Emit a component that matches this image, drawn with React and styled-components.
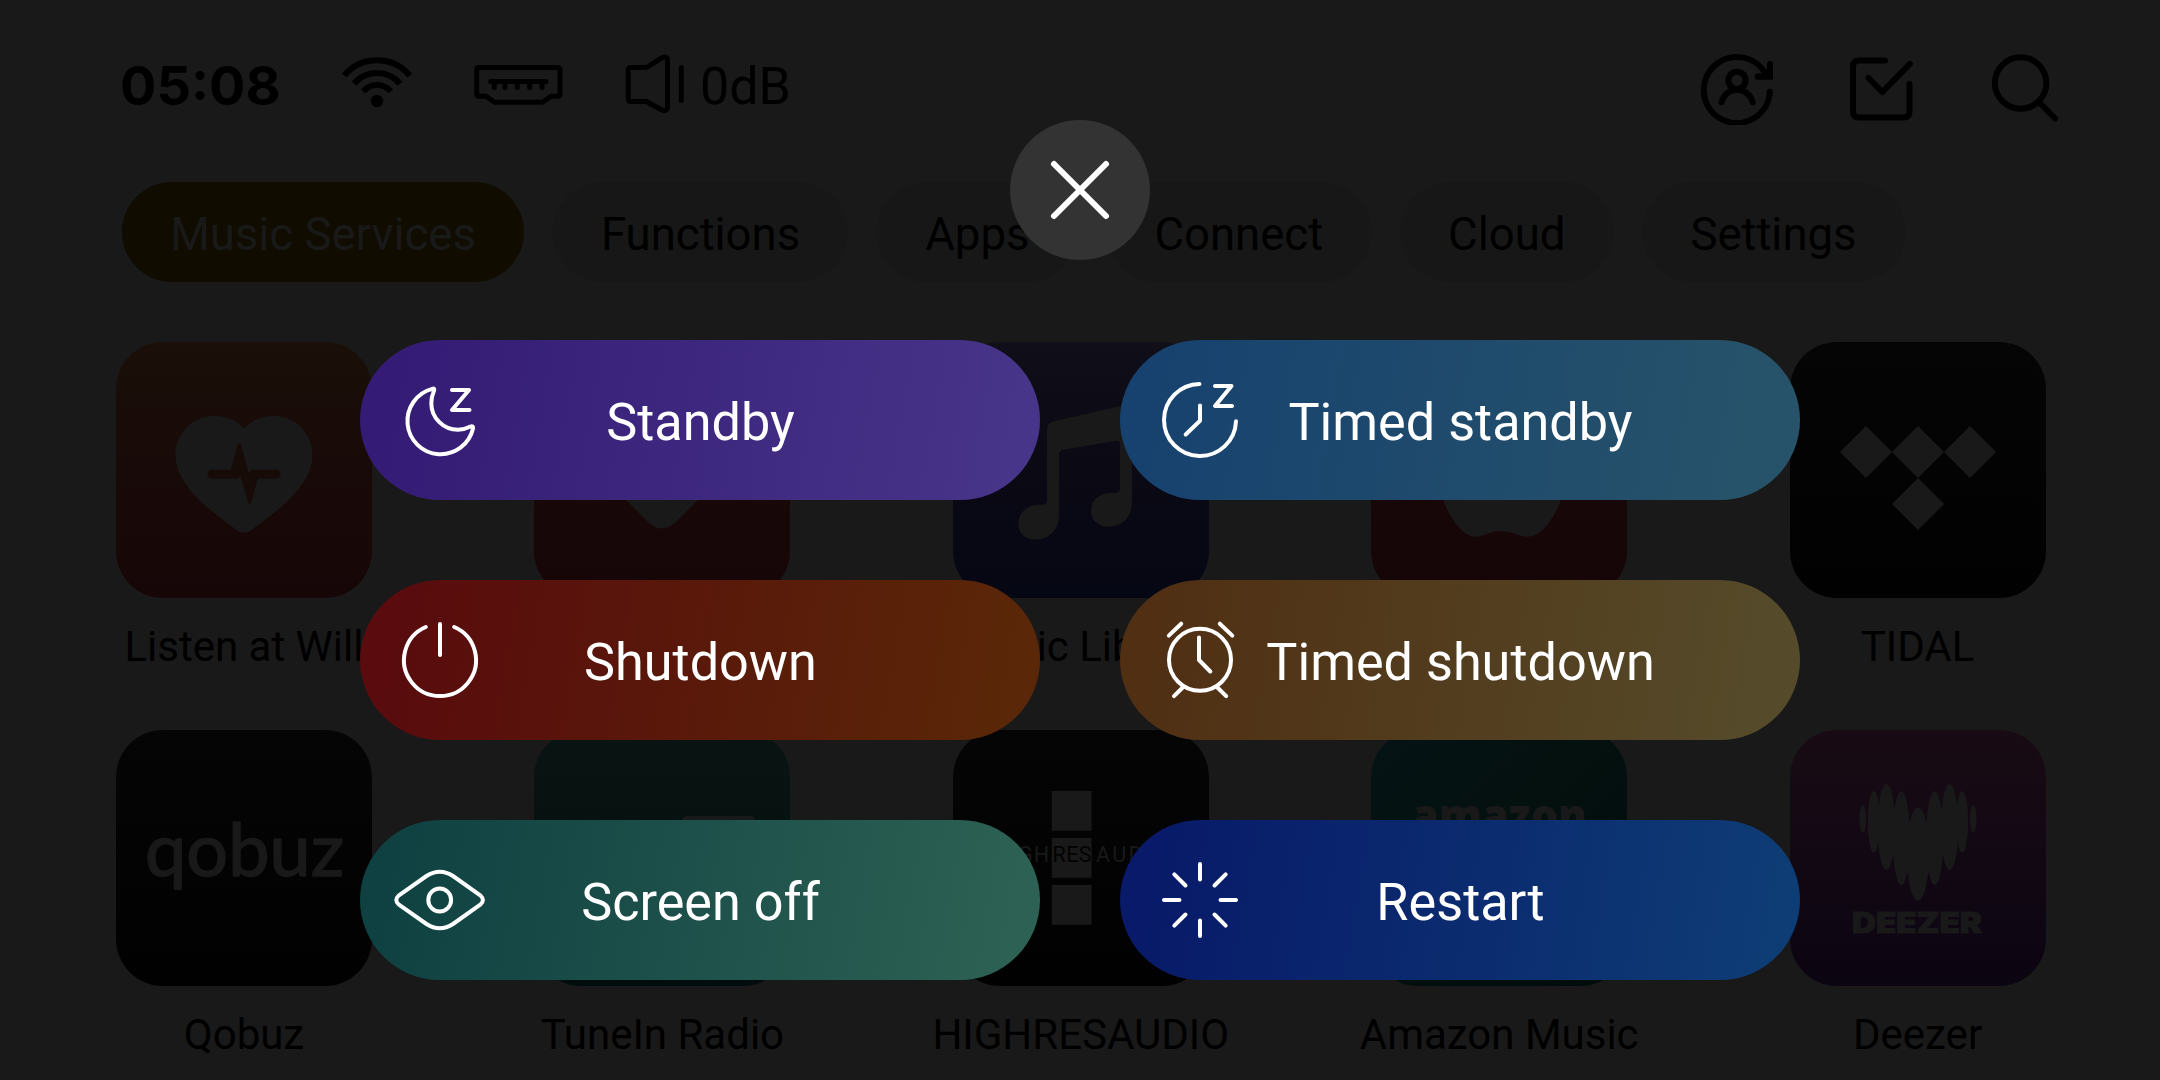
import React from 'react';
import styled, { createGlobalStyle } from 'styled-components';

const GlobalStyle = createGlobalStyle`
  * { box-sizing: border-box; }
  html, body { margin: 0; padding: 0; background: #191919; overflow: hidden; }
  svg { display: block; flex: none; }
`;

const Screen = styled.div`
  position: relative;
  width: 2160px;
  height: 1080px;
  overflow: hidden;
  background: #191919;
  color: #000;
  font-family: Roboto, 'Liberation Sans', sans-serif;
`;

const StatusBar = styled.header`
  display: flex;
  align-items: center;
  height: 182px;
  padding: 0 101px 12px 120px;
`;

const Clock = styled.div`
  width: 221px;
  font: 700 54px/80px Inter, sans-serif;
  padding-top: 1px;
`;

const Line = styled.svg`
  fill: none;
  stroke: ${(p) => p.$color || '#000'};
  stroke-width: ${(p) => p.$weight || 6};
  stroke-linecap: ${(p) => p.$cap || 'round'};
  stroke-linejoin: round;
  margin-right: ${(p) => p.$after || 0}px;
`;

const Volume = styled.div`
  font-size: 52px;
  line-height: 80px;
  padding-top: 4px;
  margin-right: auto;
`;

const Tabs = styled.nav`
  display: flex;
  gap: 29px;
  height: 100px;
  padding-left: 122px;
`;

const Tab = styled.div`
  display: flex;
  align-items: center;
  padding: 4px 48px 0;
  border-radius: 50px;
  font-size: 45.5px;
  white-space: nowrap;
  background: ${(p) => (p.$active ? '#100c00' : '#171717')};
  color: ${(p) => (p.$active ? '#191919' : '#000')};
`;

const AppGrid = styled.main`
  display: grid;
  grid-template-columns: repeat(5, 256px);
  grid-auto-rows: 388px;
  column-gap: 162.4px;
  padding: 60px 0 0 116px;
`;

const AppCell = styled.div`
  display: flex;
  flex-direction: column;
  align-items: center;
`;

const Tile = styled.div`
  width: 256px;
  height: 256px;
  border-radius: 47px;
  overflow: hidden;
  background: ${(p) => p.$bg};
`;

const AppName = styled.div`
  margin-top: 23px;
  font-size: 42px;
  line-height: 52px;
  white-space: nowrap;
`;

const Overlay = styled.div`
  position: absolute;
  inset: 0;
  display: flex;
  flex-direction: column;
  align-items: center;
  gap: 80px;
  padding-top: 120px;
`;

const CloseButton = styled.div`
  display: flex;
  align-items: center;
  justify-content: center;
  width: 140px;
  height: 140px;
  border-radius: 50%;
  background: #333;
`;

const PowerGrid = styled.div`
  display: grid;
  grid-template-columns: repeat(2, 680px);
  grid-auto-rows: 160px;
  gap: 80px;
`;

const PowerButton = styled.div`
  display: grid;
  grid-template-columns: 130px 1fr 130px;
  align-items: center;
  justify-items: end;
  border-radius: 80px;
  background: linear-gradient(100deg, ${(p) => p.$from} 5%, ${(p) => p.$to} 95%);
`;

const PowerLabel = styled.div`
  justify-self: center;
  padding: 5px 0 0 1px;
  font-size: 52.2px;
  color: #fff;
  white-space: nowrap;
`;

const INK = '#191919';

const Logo = ({ children }) => (
  <svg width="256" height="256" viewBox="0 0 256 256" fill={INK}>{children}</svg>
);

const heart =
  'M128 86.5 C119 77 108 73.5 97 74 C75 75 59.5 92 59.5 113 C59.5 143 92 167 121 188.5 Q128 193 135 188.5 C164 167 196.5 143 196.5 113 C196.5 92 181 75 159 74 C148 73.5 137 77 128 86.5Z';

const deezerBars = [
  [72.7, 3.3, 75.3, 102.7], [83.8, 6, 61, 122.7], [96.4, 8.8, 53.7, 140.3],
  [111.3, 8.6, 61, 155.3], [128, 11.2, 77.3, 170.7], [144.7, 8.6, 61, 155.3],
  [159.6, 8.8, 53.7, 140.3], [172.2, 6, 61, 122.7], [183.3, 3.3, 75.3, 102.7],
];

const apps = [
  {
    name: 'Listen at Will',
    bg: 'linear-gradient(#1a0f09, #180a08 50%, #170607)',
    logo: (
      <>
        <path d={heart} />
        <path fill="#170b08" d="M96 127.7H114.8L121.5 102.5Q123.3 100 125 102.5L132.7 132L134.5 127.7H160A4.5 4.5 0 0 1 160 136.7H141.6L135.2 160.5Q133.7 163.5 132.2 160.5L124.3 133.5L122 136.7H96A4.5 4.5 0 0 1 96 127.7Z" />
      </>
    ),
  },
  {
    name: '',
    bg: 'linear-gradient(#190a0a, #170607)',
    logo: <path d="M128 80C100 48 54 76 62 116C66 134 80 146 92 158L115 181Q128 192 141 181L164 158C176 146 190 134 194 116C202 76 156 48 128 80Z" />,
  },
  {
    name: 'Music Library',
    bg: 'linear-gradient(#100e18, #0a0914 50%, #060714)',
    logo: (
      <path d="M94 88Q94 81 100 79.5L172 63Q179 61.5 179 69V160C179 174 170 184.7 156 184.7C145 184.7 138 178 138 169C138 158 147 151 158 150.7H163Q167 150.7 167 146V102Q167 98 163 98.8L110 107.8Q106 109 106 113V173C106 187 97 197.5 82 197.5C72 197.5 65.3 191 65.3 182C65.3 171 74 163 85 162.7H90Q94 162.7 94 158Z" />
    ),
  },
  {
    name: '',
    bg: 'linear-gradient(#190a0b, #160506)',
    logo: <path d="M128 72C112 64 96 61 82 70C54 88 60 130 72 158C80 178 92 194.7 105 194.7C113 194.7 119 189 129 189C141 189 147 194.7 157 194.7C171 194.7 183 176 190 158C174 150 166 134 168 116C170 100 180 91 188 85C170 60 148 64 128 72Z" />,
  },
  {
    name: 'TIDAL',
    bg: 'linear-gradient(#050505, #030303 50%, #010101)',
    logo: <path d="M76 84l26 26-26 26-26-26zM128 84l26 26-26 26-26-26zM180 84l26 26-26 26-26-26zM128 136l26 26-26 26-26-26z" />,
  },
  {
    name: 'Qobuz',
    bg: 'linear-gradient(#050505, #030303 50%, #010101)',
    logo: (
      <text x="29" y="146" fontFamily="Lato, sans-serif" fontSize="74" textLength="199" lengthAdjust="spacingAndGlyphs" stroke={INK} strokeWidth="1.6" strokeLinejoin="round">qobuz</text>
    ),
  },
  {
    name: 'TuneIn Radio',
    bg: 'linear-gradient(#0a1413, #05110f 50%, #010d0d)',
    logo: <rect x="148.6" y="86" width="72" height="72" rx="4" />,
  },
  {
    name: 'HIGHRESAUDIO',
    bg: 'linear-gradient(#050505, #030303 50%, #010101)',
    logo: (
      <g fontFamily="Roboto, sans-serif" fontSize="21.5">
        <path d="M98.8 61h39.8v39.8h-39.8zM98.8 108h39.8v39.8h-39.8zM98.8 155h39.8v39.8h-39.8z" />
        <text x="42" y="132" textLength="54">HIGH</text>
        <text x="99.5" y="132" textLength="39" fill="#030303">RES</text>
        <text x="143" y="132" textLength="72">AUDIO</text>
      </g>
    ),
  },
  {
    name: 'Amazon Music',
    bg: 'linear-gradient(135deg, #051315, #04110f 45%, #010b0c)',
    logo: <text x="41" y="103" fontFamily="Open Sans, sans-serif" fontWeight="800" fontSize="48" textLength="175" lengthAdjust="spacingAndGlyphs">amazon</text>,
  },
  {
    name: 'Deezer',
    bg: 'linear-gradient(#180b13, #120814 50%, #0b0511)',
    logo: (
      <>
        {deezerBars.map(([x, r, top, bottom]) => (
          <ellipse key={x} cx={x} cy={(top + bottom) / 2} rx={r} ry={(bottom - top) / 2} />
        ))}
        <path d="M88.5 73L104 79L119 93H137L152 79L167.5 73V116L153 125L139 143H117L103 125L88.5 116Z" />
        <text x="62" y="203" fontFamily="Inter, sans-serif" fontWeight="900" fontSize="28.5" textLength="130" lengthAdjust="spacingAndGlyphs" stroke={INK} strokeWidth="1">DEEZER</text>
      </>
    ),
  },
];

const actions = [
  {
    label: 'Standby', from: '#341b75', to: '#473589',
    icon: (
      <>
        <path d="M42.3 18.9A33.2 33.2 0 1 0 83 58.5C83.4 56.4 82.2 55.7 80.5 56.5C76 58.8 72 59.8 68 59.8A26.7 26.7 0 0 1 41.3 33C41.3 28.5 42.4 24.5 44 20.8C44.8 18.8 44 18 42.3 18.9Z" />
        <path d="M62 20H79L62 40H79.5" />
      </>
    ),
  },
  {
    label: 'Timed standby', from: '#17426f', to: '#27536a',
    icon: <path d="M49.5 14A36 36 0 1 0 86 51.3M50 35.5V50.8L35.7 64.5M65 16H81.5L65 36H82" />,
  },
  {
    label: 'Shutdown', from: '#590b0d', to: '#5a2708',
    icon: <path d="M35.8 17A36 36 0 1 0 64.2 17M50 14V45" />,
  },
  {
    label: 'Timed shutdown', from: '#502f13', to: '#554b2a',
    icon: (
      <>
        <circle cx="50" cy="49.8" r="31" />
        <path d="M49 27.5V50L60.3 61.5M18.8 25.6L31.2 13.7M69.8 13.7L82.3 25.6M24 86.2L32.7 77.5M76.2 86.2L67.4 77.5" />
      </>
    ),
  },
  {
    label: 'Screen off', from: '#0f4142', to: '#2d6153',
    icon: (
      <>
        <path d="M8.6 45.6L36.5 26C45 20.6 54.5 20.6 63 26L90.6 45.6Q95.2 50 90.6 54.4L63 74C54.5 79.4 45 79.4 36.5 74L8.6 54.4Q4 50 8.6 45.6Z" />
        <circle cx="49.7" cy="50" r="11.4" />
      </>
    ),
  },
  {
    label: 'Restart', from: '#081a69', to: '#0e3c75',
    icon: <path d="M50 14V29.5M50 70.5V86M14 50H29.5M70.5 50H86M24.3 24.3L35.5 35.5M75.7 24.3L64.5 35.5M24.3 75.7L35.5 64.5M75.7 75.7L64.5 64.5" />,
  },
];

const tabs = ['Music Services', 'Functions', 'Apps', 'Connect', 'Cloud', 'Settings'];

export default function App() {
  return (
    <Screen>
      <GlobalStyle />
      <StatusBar>
        <Clock>05:08</Clock>
        <Line width="72" height="80" viewBox="341 45 72 80" $after={60} $cap="butt">
          <path d="M344.3 75.6A42.7 42.7 0 0 1 409.7 75.6M354 83.7A30 30 0 0 1 400 83.7M363.2 91.4A18 18 0 0 1 390.8 91.4" />
          <circle cx="377" cy="101" r="6.2" fill="#000" stroke="none" />
        </Line>
        <Line width="90" height="80" viewBox="474 45 90 80" $weight={5} $after={61}>
          <path d="M480 67.5H558.7Q561 67.5 561 70V94Q561 96.3 558.7 96.3H552L543.5 102.2H495.5L487 96.3H480Q477.7 96.3 477.7 94V70Q477.7 67.5 480 67.5Z" />
          <path d="M491.7 81.5H547M495.3 82V87.5M506 82V87.5M518.3 82V87.5M530.7 82V87.5M543 82V87.5" />
        </Line>
        <Line width="62" height="80" viewBox="624 45 62 80" $weight={5} $after={14}>
          <path d="M631 67.5H646.5L661.8 57.8Q667.5 55.5 667.5 60.5V107Q667.5 112 661.8 110L646.5 101.5H631Q628.2 101.5 628.2 98.8V70.2Q628.2 67.5 631 67.5ZM681.3 67.5V100.5" />
        </Line>
        <Volume>0dB</Volume>
        <Line width="74" height="80" viewBox="1700 45 74 80" $after={75}>
          <path d="M1769.8 91.8A33 33 0 1 1 1766.5 75.5M1770 64V76.5H1757.5" />
          <path d="M1770 70V76.5H1763Z" fill="#000" strokeLinejoin="miter" />
          <circle cx="1737" cy="80.3" r="8.6" />
          <path d="M1721.5 102.3C1726 85.5 1748 85.5 1752.7 102.3" />
        </Line>
        <Line width="66" height="80" viewBox="1849 45 66 80" $after={74}>
          <path d="M1885 60.5H1859Q1853 60.5 1853 66.5V111.5Q1853 117.5 1859 117.5H1903.5Q1909.5 117.5 1909.5 111.5V84M1868.5 78L1882.3 92L1909.8 64" />
        </Line>
        <Line width="70" height="80" viewBox="1989 45 70 80">
          <circle cx="2020.6" cy="83" r="25.7" />
          <path d="M2039.5 102.5L2055 118.5" />
        </Line>
      </StatusBar>
      <Tabs>
        {tabs.map((t, i) => <Tab key={t} $active={i === 0}>{t}</Tab>)}
      </Tabs>
      <AppGrid>
        {apps.map((a, i) => (
          <AppCell key={i}>
            <Tile $bg={a.bg}><Logo>{a.logo}</Logo></Tile>
            <AppName>{a.name}</AppName>
          </AppCell>
        ))}
      </AppGrid>
      <Overlay>
        <CloseButton>
          <Line width="64" height="64" viewBox="0 0 64 64" $color="#fff">
            <path d="M6 6L58 58M58 6L6 58" />
          </Line>
        </CloseButton>
        <PowerGrid>
          {actions.map((a) => (
            <PowerButton key={a.label} $from={a.from} $to={a.to}>
              <Line width="100" height="100" viewBox="0 0 100 100" $color="#fff" $weight={4}>{a.icon}</Line>
              <PowerLabel>{a.label}</PowerLabel>
            </PowerButton>
          ))}
        </PowerGrid>
      </Overlay>
    </Screen>
  );
}
